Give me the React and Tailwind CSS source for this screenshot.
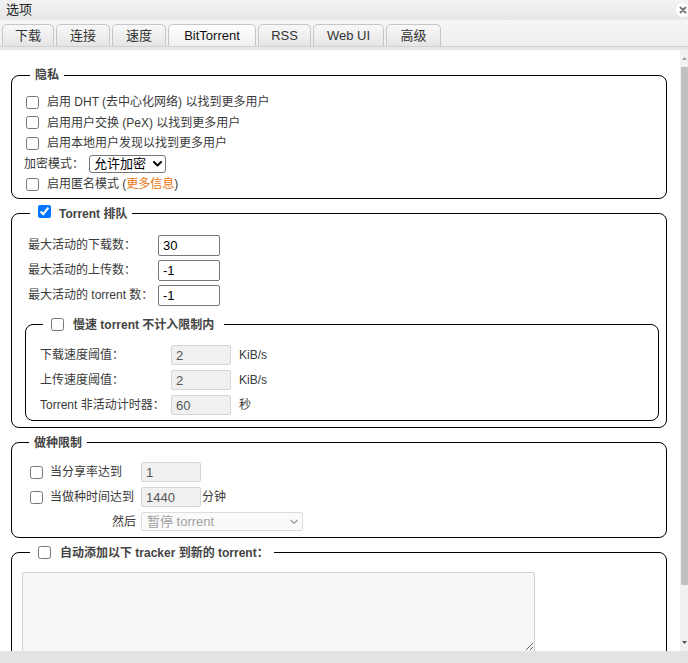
import React from "react";

const Check = ({ checked = false, className = "" }) => (
  <input
    type="checkbox"
    defaultChecked={checked}
    className={"w-[13px] h-[13px] shrink-0 " + className}
  />
);

const Chevron = ({ color = "#000", w = 9, sw = 2 }) => (
  <svg width={w} height="6" viewBox="0 0 9 6" fill="none">
    <path d="M1 1 L4.5 4.5 L8 1" stroke={color} strokeWidth={sw} strokeLinecap="round" strokeLinejoin="round" />
  </svg>
);

const tabs = [
  { t: "下载", w: "w-[52px]" },
  { t: "连接", w: "w-[54px]" },
  { t: "速度", w: "w-[54px]" },
  { t: "BitTorrent", w: "w-[88px]", active: true },
  { t: "RSS", w: "w-[53px]" },
  { t: "Web UI", w: "w-[71px]" },
  { t: "高级", w: "w-[55px]" },
];

function Tab({ t, w, active }) {
  return (
    <div
      className={
        w +
        " h-[22px] flex items-center justify-center border border-b-0 border-[#c6c6c6] rounded-t-[5px] text-[13px] " +
        (active
          ? "bg-linear-to-b from-[#fdfdfd] to-[#f1f1f1] text-[#111]"
          : "bg-linear-to-b from-[#f8f8f8] to-[#e5e5e5] text-[#333]")
      }
    >
      {t}
    </div>
  );
}

function TextIn({ value, w = "w-[62px]", h = "h-[21px]" }) {
  return (
    <input
      type="text"
      defaultValue={value}
      className={w + " " + h + " border border-[#767676] rounded-[2px] px-[4px] text-[13px] text-black bg-white shrink-0"}
    />
  );
}

function DisIn({ value, w = "w-[60px]", h = "h-[20px]" }) {
  return (
    <input
      type="text"
      disabled
      defaultValue={value}
      className={w + " " + h + " border border-[#d6d6d6] rounded-[2px] px-[4px] text-[13px] text-[#555] bg-[#f0f0f0] shrink-0"}
    />
  );
}

export default function App() {
  return (
    <div className="w-[688px] h-[663px] overflow-hidden bg-white flex flex-col font-['Liberation_Sans','Noto_Sans_CJK_SC',sans-serif] text-[12px] text-[#3a3a3a]">
      {/* title bar */}
      <div className="h-[20px] shrink-0 flex items-center justify-between pl-[6px] bg-linear-to-b from-[#f3f3f3] to-[#e7e7e7]">
        <span className="text-[13px] text-[#222]">选项</span>
        <div className="w-[14px] h-[14px] rounded-full bg-white mr-[-2px] flex items-center justify-center">
          <svg width="8" height="8" viewBox="0 0 8 8">
            <path d="M1.5 1.5 L6.5 6.5 M6.5 1.5 L1.5 6.5" stroke="#7a7a7a" strokeWidth="2" strokeLinecap="round" />
          </svg>
        </div>
      </div>

      {/* tab strip */}
      <div className="h-[30px] shrink-0 flex flex-col bg-linear-to-b from-[#f6f6f6] to-[#ededed]">
        <div className="flex items-end gap-[2px] pl-[2px] pt-[4px] h-[26px]">
          {tabs.map((x) => (
            <Tab key={x.t} {...x} />
          ))}
        </div>
        <div className="h-[4px] bg-[#e7e7e7] border-t border-[#d2d2d2]" />
      </div>

      {/* body */}
      <div className="flex flex-1 min-h-0">
        <div className="flex-1 overflow-hidden pl-[11px] pr-[13px] pt-[17px]">
          {/* 隐私 */}
          <fieldset className="border border-black rounded-[8px] pl-[12px] pr-[8px] pt-[9px] pb-[3px]">
            <legend className="ml-[6px] px-[5px]">
              <span className="flex items-center h-[16px] font-bold text-[#444]">隐私</span>
            </legend>
            <div className="h-[20.5px] flex items-center">
              <Check className="ml-[2px] mr-[8px]" />
              <span>启用 DHT (去中心化网络) 以找到更多用户</span>
            </div>
            <div className="h-[20.5px] flex items-center">
              <Check className="ml-[2px] mr-[8px]" />
              <span>启用用户交换 (PeX) 以找到更多用户</span>
            </div>
            <div className="h-[20.5px] flex items-center">
              <Check className="ml-[2px] mr-[8px]" />
              <span>启用本地用户发现以找到更多用户</span>
            </div>
            <div className="h-[20.5px] flex items-center">
              <span className="w-[65px]">加密模式：</span>
              <div className="relative flex items-center">
                <select
                  defaultValue="a"
                  className="appearance-none w-[77px] h-[18px] border border-[#767676] rounded-[3px] pl-[4px] text-[13px] leading-[16px] text-black bg-white"
                >
                  <option value="a">允许加密</option>
                </select>
                <span className="absolute right-[4px] top-[6px] pointer-events-none flex">
                  <Chevron />
                </span>
              </div>
            </div>
            <div className="h-[20.5px] flex items-center">
              <Check className="ml-[2px] mr-[8px]" />
              <span>
                启用匿名模式 (<span className="text-[#e8740c]">更多信息</span>)
              </span>
            </div>
          </fieldset>

          {/* Torrent 排队 */}
          <fieldset className="border border-black rounded-[8px] pl-[13px] pr-[7px] pt-[11px] pb-[6px] mt-[7px]">
            <legend className="ml-[5px] px-[5px]">
              <span className="flex items-center h-[16px]">
                <Check checked className="ml-[3px] mr-[8px] -translate-y-[2px]" />
                <span className="font-bold text-[#444]">Torrent 排队</span>
              </span>
            </legend>
            {[
              ["最大活动的下载数：", "30"],
              ["最大活动的上传数：", "-1"],
              ["最大活动的 torrent 数：", "-1"],
            ].map(([l, v]) => (
              <div key={l} className="h-[25px] flex items-center pl-[3px]">
                <span className="w-[130px]">{l}</span>
                <TextIn value={v} />
              </div>
            ))}

            {/* 慢速 torrent */}
            <fieldset className="border border-black rounded-[8px] pl-[14px] pr-[8px] pt-[10px] pb-[2px] mt-[9px]">
              <legend className="ml-[3px] pl-[5px] pr-[10px]">
                <span className="flex items-center h-[16px]">
                  <Check className="ml-[3px] mr-[9px]" />
                  <span className="font-bold text-[#444]">慢速 torrent 不计入限制内</span>
                </span>
              </legend>
              {[
                ["下载速度阈值：", "2", "KiB/s"],
                ["上传速度阈值：", "2", "KiB/s"],
                ["Torrent 非活动计时器：", "60", "秒"],
              ].map(([l, v, u]) => (
                <div key={l} className="h-[25px] flex items-center">
                  <span className="w-[131px]">{l}</span>
                  <DisIn value={v} />
                  <span className="ml-[8px]">{u}</span>
                </div>
              ))}
            </fieldset>
          </fieldset>

          {/* 做种限制 */}
          <fieldset className="border border-black rounded-[8px] pl-[13px] pr-[8px] pt-[9px] pb-[3px] mt-[7px]">
            <legend className="ml-[4px] px-[5px]">
              <span className="flex items-center h-[16px] font-bold text-[#444]">做种限制</span>
            </legend>
            <div className="h-[25px] flex items-center">
              <div className="w-[116px] flex items-center">
                <Check className="ml-[5px] mr-[7px]" />
                <span>当分享率达到</span>
              </div>
              <DisIn value="1" />
            </div>
            <div className="h-[25px] flex items-center">
              <div className="w-[116px] flex items-center">
                <Check className="ml-[5px] mr-[7px]" />
                <span>当做种时间达到</span>
              </div>
              <DisIn value="1440" />
              <span className="ml-[1px]">分钟</span>
            </div>
            <div className="h-[24px] flex items-center">
              <div className="w-[116px] flex justify-end pr-[5px]">
                <span>然后</span>
              </div>
              <div className="relative flex items-center">
                <select
                  disabled
                  defaultValue="p"
                  className="appearance-none w-[162px] h-[19px] border border-[#dcdcdc] rounded-[2px] pl-[5px] text-[13px] leading-[17px] text-[#a0a0a0] bg-[#fafafa]"
                >
                  <option value="p">暂停 torrent</option>
                </select>
                <span className="absolute right-[5px] top-[7px] pointer-events-none flex">
                  <Chevron color="#9a9a9a" w={8} sw={1.4} />
                </span>
              </div>
            </div>
          </fieldset>

          {/* tracker */}
          <fieldset className="border border-black rounded-[8px] pl-[10px] pr-[8px] pt-[11px] pb-[6px] mt-[7px]">
            <legend className="ml-[8px] px-[5px]">
              <span className="flex items-center h-[16px]">
                <Check className="ml-[3px] mr-[9px]" />
                <span className="font-bold text-[#444]">自动添加以下 tracker 到新的 torrent：</span>
              </span>
            </legend>
            <textarea
              disabled
              className="block w-[513px] h-[80px] bg-[#f7f7f7] border border-[#d0d0d0] rounded-[2px]"
            />
          </fieldset>
        </div>

        {/* scrollbar */}
        <div className="w-[8px] shrink-0 bg-[#f1f1f1] flex flex-col">
          <div className="h-[17px] flex items-center justify-center">
            <svg width="5" height="3" viewBox="0 0 5 3">
              <path d="M0 3 L2.5 0 L5 3 Z" fill="#a3a3a3" />
            </svg>
          </div>
          <div className="h-[518px] ml-[1px] bg-[#c1c1c1]" />
          <div className="flex-1" />
          <div className="h-[17px] flex items-center justify-center">
            <svg width="5" height="3" viewBox="0 0 5 3">
              <path d="M0 0 L2.5 3 L5 0 Z" fill="#505050" />
            </svg>
          </div>
        </div>
      </div>

      <div className="h-[12px] shrink-0 bg-[#e3e3e3]" />
    </div>
  );
}
